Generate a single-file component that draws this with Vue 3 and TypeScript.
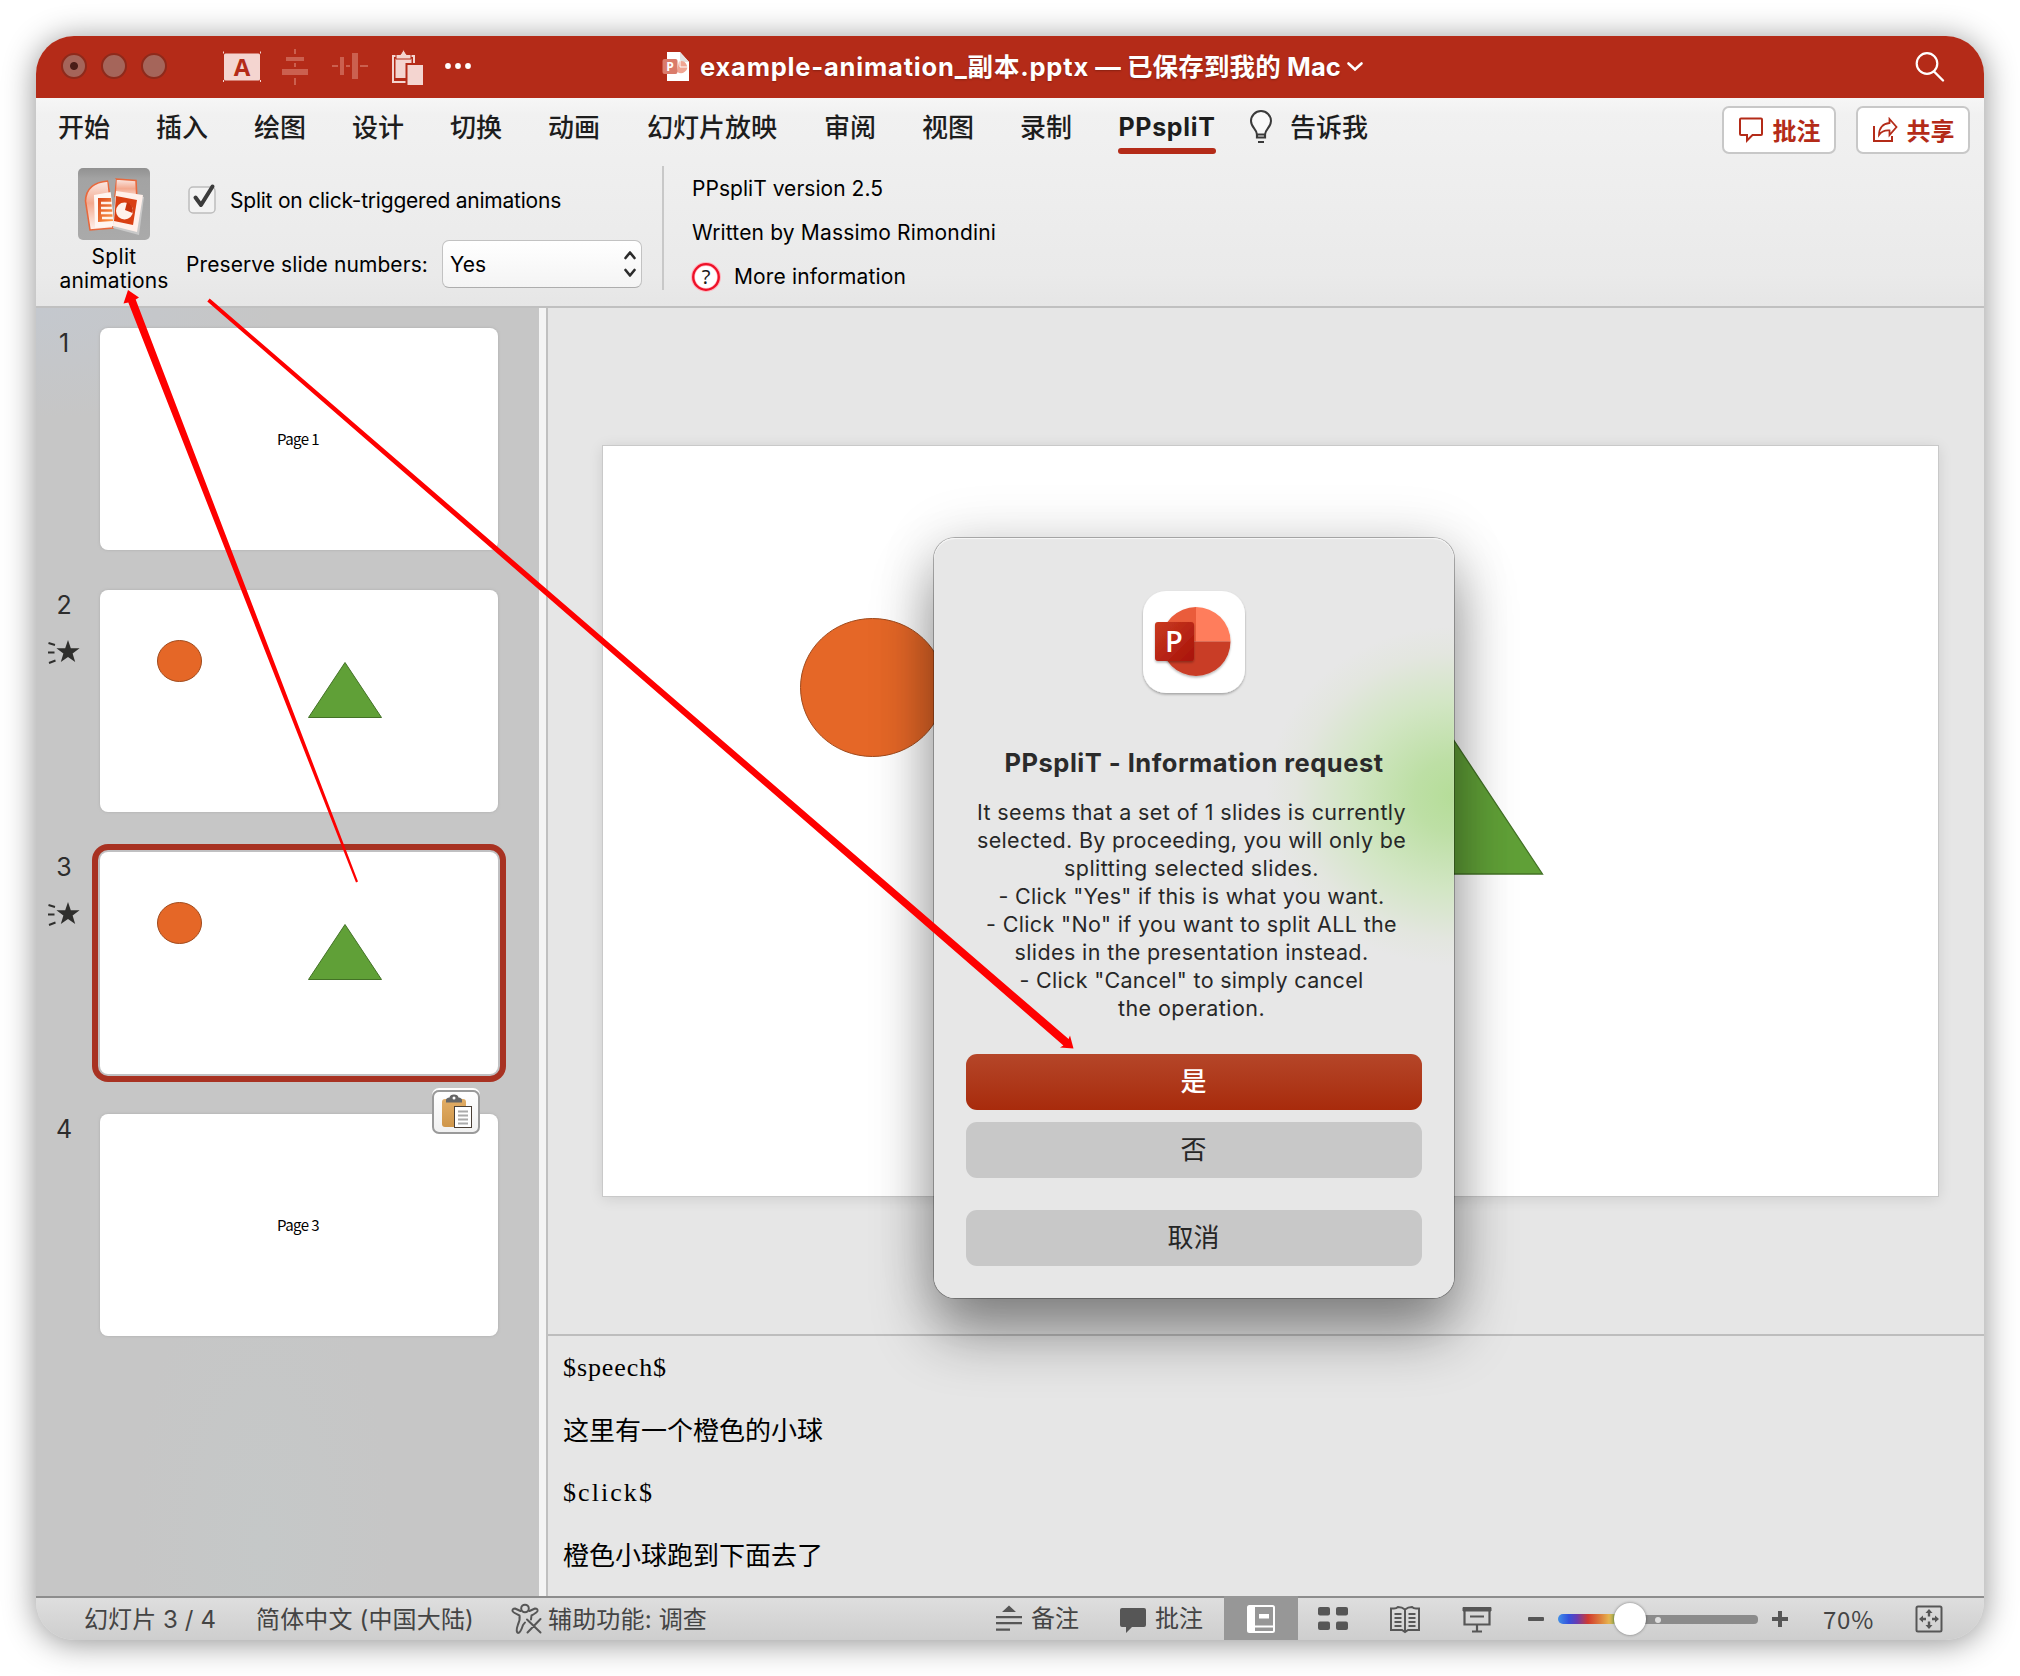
<script setup lang="ts">
import type { Directive } from 'vue'

interface Tab { label: string; width: number; active?: boolean }
interface Slide { no: number; text?: string; animated?: boolean; selected?: boolean }

const tabs: Tab[] = [
  { label: '开始', width: 52 },
  { label: '插入', width: 52 },
  { label: '绘图', width: 52 },
  { label: '设计', width: 52 },
  { label: '切换', width: 52 },
  { label: '动画', width: 52 },
  { label: '幻灯片放映', width: 132 },
  { label: '审阅', width: 52 },
  { label: '视图', width: 52 },
  { label: '录制', width: 52 },
  { label: 'PPspliT', width: 98, active: true },
]

const slides: Slide[] = [
  { no: 1, text: 'Page 1' },
  { no: 2, animated: true },
  { no: 3, animated: true, selected: true },
  { no: 4, text: 'Page 3' },
]

const message: { text: string; width: number }[] = [
  { text: 'It seems that a set of 1 slides is currently', width: 429 },
  { text: 'selected. By proceeding, you will only be', width: 429 },
  { text: 'splitting selected slides.', width: 255 },
  { text: '- Click "Yes" if this is what you want.', width: 386 },
  { text: '- Click "No" if you want to split ALL the', width: 411 },
  { text: 'slides in the presentation instead.', width: 354 },
  { text: '- Click "Cancel" to simply cancel', width: 344 },
  { text: 'the operation.', width: 147 },
]

const notes: { text: string; width: number }[] = [
  { text: '$speech$', width: 104 },
  { text: '这里有一个橙色的小球', width: 260 },
  { text: '$click$', width: 91 },
  { text: '橙色小球跑到下面去了', width: 260 },
]

// Tracks a label so that it fills the given width.
const vFit: Directive<HTMLElement, number> = {
  mounted(el, binding) {
    const natural = el.getBoundingClientRect().width
    const count = (el.textContent ?? '').length
    if (count > 0) el.style.letterSpacing = `${(binding.value - natural) / count}px`
  },
}
</script>

<template>
  <div class="desktop">
    <div class="window">
      <header class="titlebar">
        <div class="lights"><i class="dot"></i><i></i><i></i></div>
        <svg class="qat" width="260" height="40" viewBox="0 0 260 40">
          <g>
            <rect x="4" y="6.500" width="36" height="27" rx="1.500" fill="#f4d5d0" />
            <path d="M3.500 4.500v2M40.500 4.500v2M3.500 33v2M40.500 33v2" stroke="#f4d5d0" stroke-width="1" />
            <text x="22" y="28.500" text-anchor="middle" class="qat-a">A</text>
          </g>
          <g fill="#cb604f">
            <path d="M66 10h18v4H66zM62 22h26v6H62zM74 2h2v5h-2zM74 16h2v4h-2zM74 31h2v7h-2z" />
            <path d="M120 10h4v18h-4zM132 6h6v26h-6zM112 18h6v2h-6zM126 18h4v2h-4zM140 18h8v2h-8z" />
          </g>
          <g>
            <rect x="173" y="9" width="21" height="26" fill="none" stroke="#f4d5d0" stroke-width="2" />
            <rect x="175.500" y="11.500" width="16" height="19.500" fill="#f4d5d0" />
            <path d="M176 7.500h4.500l3-5 3 5h4.500v4.500h-15z" fill="#f4d5d0" stroke="#b42b18" stroke-width="1" />
            <rect x="185.500" y="16" width="18" height="22" fill="#b42b18" />
            <rect x="187.500" y="18" width="15.500" height="20" fill="#f4d5d0" />
          </g>
          <g fill="#fff"><circle cx="228" cy="19" r="2.900" /><circle cx="238" cy="19" r="2.900" /><circle cx="248" cy="19" r="2.900" /></g>
        </svg>
        <div class="doc">
          <svg width="28" height="32" viewBox="0 0 28 32">
            <path d="M5 1h13l9 10v19H5z" fill="#fff" />
            <path d="M18 1l9 10h-6q-3 0-3-3z" fill="#e3e1e0" />
            <path d="M17 10.500a6 6 0 1 1-2 10z" fill="#f0a593" />
            <path d="M18 10v6h7" fill="none" stroke="#fff" stroke-width="1" />
            <rect x="0.500" y="8" width="15" height="15" rx="2" fill="#da7b6b" />
            <text x="8" y="20" text-anchor="middle" class="doc-p">P</text>
          </svg>
          <span class="doc-name"><span v-fit="302 * 1.288">example-animation_副本.pptx</span><span v-fit="252"> — 已保存到我的 Mac</span></span>
          <svg width="18" height="12" viewBox="0 0 18 12"><path d="M2.500 2.500L9 8.500l6.500-6" fill="none" stroke="#fff" stroke-width="2.600" stroke-linecap="round" /></svg>
        </div>
        <svg class="search" width="32" height="32" viewBox="0 0 32 32">
          <circle cx="13" cy="12.500" r="10.300" fill="none" stroke="#fff" stroke-width="2.200" />
          <path d="M20 20.500l9 9" stroke="#fff" stroke-width="2.400" stroke-linecap="round" />
        </svg>
      </header>

      <section class="ribbon">
        <nav class="tabs">
          <span v-for="t in tabs" :key="t.label" class="tab" :class="{ active: t.active }" :style="{ width: t.width + 'px' }">
            <b v-if="t.active" v-fit="97">{{ t.label }}</b><template v-else>{{ t.label }}</template>
          </span>
          <svg class="bulb" width="24" height="34" viewBox="0 0 24 34">
            <path d="M8 24.500c0-5-6-7-6-13.500a10 10 0 0 1 20 0c0 6.500-6 8.500-6 13.500z" fill="#f8f8f8" stroke="#3a3a3a" stroke-width="2" />
            <path d="M8 24v3.500h8V24M9 32h6" fill="none" stroke="#3a3a3a" stroke-width="2.200" />
          </svg>
          <span class="tell">告诉我</span>
          <div class="actions">
            <button>
              <svg width="26" height="26" viewBox="0 0 26 26"><path d="M3 1.500h20q1 0 1 1V17q0 1-1 1h-8.500L9 23.500V18H3q-1 0-1-1V2.500q0-1 1-1z" fill="none" stroke="#b42b18" stroke-width="2" /></svg>
              批注
            </button>
            <button>
              <svg width="26" height="26" viewBox="0 0 26 26"><path d="M2 9v15h18v-5" fill="none" stroke="#b42b18" stroke-width="2" /><path d="M17.500 2l7 8-7 8v-4.500C12 13 9.500 14.500 7 18c0-7 4-11.500 10.500-12z" fill="none" stroke="#b42b18" stroke-width="1.800" /></svg>
              共享
            </button>
          </div>
        </nav>
        <div class="tools">
          <div class="split">
            <svg width="72" height="72" viewBox="0 0 72 72">
              <defs>
                <linearGradient id="tile" x1="0" y1="0" x2="0" y2="1"><stop offset="0" stop-color="#919191" /><stop offset=".15" stop-color="#a3a3a3" /><stop offset="1" stop-color="#aaa" /></linearGradient>
                <linearGradient id="gl" x1="0" y1="0" x2="0" y2="1"><stop offset="0" stop-color="#fbe9e4" /><stop offset=".45" stop-color="#f3a98f" /><stop offset="1" stop-color="#fff3ee" /></linearGradient>
                <linearGradient id="or" x1="0" y1="0" x2="1" y2="1"><stop offset="0" stop-color="#d9481c" /><stop offset="1" stop-color="#ff9a4a" /></linearGradient>
              </defs>
              <rect width="72" height="72" rx="5" fill="url(#tile)" />
              <path d="M30 13C16 14 8 20 7.500 33L12 62l23-2z" fill="url(#gl)" stroke="#e8683c" stroke-width="1.600" />
              <path d="M16 27l17-3 3 34-19 2z" fill="#fff6f2" />
              <path d="M20 30h13l2 23-15 1z" fill="url(#or)" />
              <path d="M23 35h11M23 40h11M23 45h12M24 50h11" stroke="#fff1e8" stroke-width="2.400" />
              <path d="M38 11l20 1.500 1 20-22-4z" fill="url(#gl)" stroke="#e8683c" stroke-width="1.600" />
              <path d="M38 25l28 4-5 38-26-7z" fill="#c9c9c9" />
              <path d="M38 23l27 4-6 37-24-6z" fill="#fff0ea" />
              <path d="M38 28l21 4-4 25-19-4z" fill="#d93f12" />
              <circle cx="46.500" cy="43" r="8.500" fill="#fff1ea" />
              <path d="M47 42l2-8a9 9 0 0 1 5.500 11z" fill="#c8330c" />
              <path d="M30 12l8-1-2 17-.5 10z" fill="#a6a6a6" />
            </svg>
            <span v-fit="45">Split</span>
            <span v-fit="109">animations</span>
          </div>
          <div class="options">
            <div class="option">
              <svg class="check" width="30" height="32" viewBox="0 0 30 32">
                <rect x="2" y="4" width="26" height="26" rx="4" fill="#f3f3f3" stroke="#bdbdbd" stroke-width="1.500" />
                <path d="M8.500 14.500l5.500 7.500L25.500 3.500" fill="none" stroke="#3c3c3c" stroke-width="4" stroke-linecap="round" stroke-linejoin="round" />
              </svg>
              <span v-fit="331">Split on click-triggered animations</span>
            </div>
            <div class="option">
              <span v-fit="242">Preserve slide numbers:</span>
              <div class="select">
                <span v-fit="36">Yes</span>
                <svg width="14" height="30" viewBox="0 0 14 30"><path d="M2.500 9L7 3.500 11.500 9M2.500 21L7 26.500 11.500 21" fill="none" stroke="#2c2c2c" stroke-width="2.600" stroke-linecap="round" stroke-linejoin="round" /></svg>
              </div>
            </div>
          </div>
          <div class="about">
            <div><span v-fit="191">PPspliT version 2.5</span></div>
            <div><span v-fit="304">Written by Massimo Rimondini</span></div>
            <div class="more">
              <svg width="32" height="32" viewBox="0 0 32 32"><circle cx="16" cy="16" r="13" fill="#fff" stroke="#ffb3bd" stroke-width="4" /><circle cx="16" cy="16" r="12.800" fill="none" stroke="#ee1128" stroke-width="2.300" /><text x="16" y="23" text-anchor="middle" class="qm">?</text></svg>
              <span v-fit="172">More information</span>
            </div>
          </div>
        </div>
      </section>

      <main class="work">
        <aside class="thumbs">
          <div v-for="s in slides" :key="s.no" class="thumb-row">
            <div class="gutter">
              <span>{{ s.no }}</span>
              <svg v-if="s.animated" width="34" height="28" viewBox="0 0 34 28">
                <path d="M21 2l2.800 8.300h8.800l-7 5.300 2.600 8.500L21 19l-7.200 5.100 2.600-8.500-7-5.300h8.800z" fill="#2f2f2d" />
                <path d="M1.500 5l6.500 2M1 14.500h6.500M2 25l6.500-2.500" stroke="#2f2f2d" stroke-width="1.900" />
              </svg>
            </div>
            <div class="thumb" :class="{ selected: s.selected }">
              <span v-if="s.text" v-fit="44">{{ s.text }}</span>
              <svg v-else width="398" height="222" viewBox="0 0 398 222">
                <ellipse cx="79.500" cy="71" rx="22" ry="20.500" fill="#e56727" stroke="#a04a1c" stroke-width="1" />
                <path d="M245 72.500L281.500 127.500H208.500z" fill="#60a037" stroke="#437226" stroke-width="1" />
              </svg>
            </div>
          </div>
          <div class="paste">
            <svg width="32" height="36" viewBox="0 0 32 36">
              <defs><linearGradient id="clip" x1="0" y1="0" x2="0" y2="1"><stop offset="0" stop-color="#e2ad65" /><stop offset="1" stop-color="#cf964a" /></linearGradient></defs>
              <rect x="1" y="5" width="24" height="28" rx="3" fill="url(#clip)" />
              <path d="M5 8.500V6q0-2 3.500-2.500Q9 .5 13 .5t4.500 3Q21 4 21 6v2.500z" fill="#666" />
              <circle cx="13" cy="4" r="1.500" fill="#fff" />
              <rect x="13.500" y="12.500" width="17" height="21" fill="#fff" stroke="#4a4037" stroke-width="1" />
              <path d="M17 17.500h10M17 21.500h10M17 25.500h10M17 29.500h10" stroke="#aaa" stroke-width="1.800" />
            </svg>
          </div>
        </aside>
        <div class="divider"></div>
        <div class="editor">
          <div class="canvas">
            <svg class="slide" width="1335" height="750" viewBox="0 0 1335 750">
              <ellipse cx="269.500" cy="241.500" rx="72" ry="69" fill="#e56727" stroke="#a04a1c" stroke-width="1" />
              <path d="M817.500 244L939.500 428H694z" fill="#60a037" stroke="#437226" stroke-width="1.300" />
            </svg>
          </div>
          <div class="notes">
            <p v-for="n in notes" :key="n.text"><span v-fit="n.width">{{ n.text }}</span></p>
          </div>
        </div>
      </main>

      <footer class="status">
        <span v-fit="132" class="s-page">幻灯片 3 / 4</span>
        <span v-fit="218" class="s-lang">简体中文 (中国大陆)</span>
        <svg class="s-acc" width="32" height="32" viewBox="0 0 32 32" fill="none" stroke="#565656" stroke-width="2" stroke-linecap="round" stroke-linejoin="round">
          <circle cx="15" cy="5.500" r="3.800" />
          <path d="M10.500 8L5 5.500q-2.800 0-2.500 2.500.5 1.500 7 4.500.8 4-1.500 9-2.500 7 0 8.500 2.500 0 5-8l2-2.500M19.500 8L25 5.500q3 0 2.500 2.500-.5 1.500-6 4.500l-.5 4M17 16.500l13.500 13M30.500 16L17.500 29.500" />
        </svg>
        <span v-fit="159" class="s-acctext">辅助功能: 调查</span>
        <div class="s-right">
          <svg width="28" height="30" viewBox="0 0 28 30" fill="#565656"><path d="M14 1.500L21 8H7zM1 12h26v2.200H1zM1 18h26v2.200H1zM1 24.500h14v2.200H1z" /></svg>
          <span class="s-notes">备注</span>
          <svg width="28" height="30" viewBox="0 0 28 30"><path d="M3 4h22q2 0 2 2v15q0 2-2 2H13l-6 6v-6H3q-2 0-2-2V6q0-2 2-2z" fill="#565656" /></svg>
          <span class="s-comm">批注</span>
          <div class="view current">
            <svg width="30" height="30" viewBox="0 0 30 30"><rect x="2" y="2" width="26" height="26" rx="1.500" fill="none" stroke="#fff" stroke-width="2" /><path d="M2 2h7v26H2zM13 10h10v4.500H13zM9 21.500h19v2H9z" fill="#fff" /></svg>
          </div>
          <div class="view">
            <svg width="30" height="28" viewBox="0 0 30 28" fill="#565656"><rect x="0" y="2" width="12" height="8.500" rx="2" /><rect x="18" y="2" width="12" height="8.500" rx="2" /><rect x="0" y="16.500" width="12" height="8.500" rx="2" /><rect x="18" y="16.500" width="12" height="8.500" rx="2" /></svg>
          </div>
          <div class="view">
            <svg width="30" height="30" viewBox="0 0 30 30" fill="none" stroke="#565656" stroke-width="2"><path d="M15 5.500Q12 3 8 3q-1.500 1.500-4 1.500H1V26h11l3 2 3-2h11V4.500h-3q-2.500 0-4-1.500-4 0-7 2.500zV27" /><path d="M4.500 10h7M4.500 14h7M4.500 18h7M4.500 22h7M18.500 10h7M18.500 14h7M18.500 18h7M18.500 22h7" stroke-width="1.800" /></svg>
          </div>
          <div class="view">
            <svg width="30" height="30" viewBox="0 0 30 30"><path d="M1 3.500h28V7H1z" fill="#565656" stroke="#565656" stroke-linejoin="round" /><path d="M2.500 6v14.500h25V6M8 12.500h14M15 20v7M10 27.500h10" fill="none" stroke="#565656" stroke-width="2.200" /></svg>
          </div>
          <i class="minus"></i>
          <div class="slider"><i class="rainbow"></i><i class="track"></i><i class="tick"></i><i class="knob"></i></div>
          <i class="plus"></i>
          <span v-fit="51" class="s-zoom">70%</span>
          <svg width="28" height="28" viewBox="0 0 28 28"><rect x="1.500" y="1.500" width="25" height="25" rx="1.500" fill="none" stroke="#565656" stroke-width="2" /><path d="M14 4l3.500 4h-2.300v3.500h-2.400V8h-2.300zM14 24l3.500-4h-2.300v-3.500h-2.400V20h-2.300zM4 14l4-3.500v2.300h3v2.400H8v2.300zM24 14l-4-3.500v2.300h-3v2.400h3v2.300z" fill="#565656" /></svg>
        </div>
      </footer>
    </div>

    <div class="dialog">
      <svg class="app-icon" width="110" height="110" viewBox="0 0 110 110">
        <defs>
          <linearGradient id="plate" x1="0" y1="0" x2="1" y2="1"><stop offset="0" stop-color="#c93a20" /><stop offset="1" stop-color="#a8120a" /></linearGradient>
          <filter id="soft" x="-20%" y="-20%" width="150%" height="150%"><feDropShadow dx="0" dy="1.500" stdDeviation="1.200" flood-opacity=".3" /></filter>
        </defs>
        <rect x="4" y="3" width="102" height="102" rx="23" fill="#fff" filter="url(#soft)" />
        <g filter="url(#soft)">
          <path d="M57 19a34.500 34.500 0 0 0-34.500 34.500H57z" fill="#ea5b3b" />
          <path d="M57 19a34.500 34.500 0 0 1 34.500 34.500H57z" fill="#ff7d5b" />
          <path d="M22.500 53.500a34.500 34.500 0 0 0 69 0z" fill="#c93d26" />
        </g>
        <rect x="16" y="34" width="39" height="39" rx="3" fill="url(#plate)" filter="url(#soft)" />
        <text x="35" y="63.500" text-anchor="middle" class="app-p">P</text>
      </svg>
      <h1><span v-fit="379">PPspliT - Information request</span></h1>
      <div class="message">
        <p v-for="m in message" :key="m.text"><span v-fit="m.width">{{ m.text }}</span></p>
      </div>
      <button class="primary">是</button>
      <button>否</button>
      <button class="cancel">取消</button>
    </div>

    <svg class="arrows" width="2020" height="1676" viewBox="0 0 2020 1676" fill="#fe0000">
      <path d="M356 882.500L128.300 302.400 123.500 303.500 128 290 139 297.500 135.700 299.600 358 881.500z" />
      <path d="M207.300 301.400L1063.400 1045.500 1060 1047.500 1073.500 1048.500 1070 1035.500 1068.600 1039 209.700 298.600z" />
    </svg>
  </div>
</template>

<style>
body { margin: 0; background: #fff; }
</style>

<style scoped>
.desktop {
  position: relative;
  width: 2020px;
  height: 1676px;
  overflow: hidden;
  box-sizing: border-box;
  padding: 36px;
  background: #fff;
  font-family: Inter, "Noto Sans CJK SC", sans-serif;
  color: #000;
}
.desktop span { white-space: pre; }
svg { display: block; flex: none; }
p { margin: 0; }
.window {
  width: 1948px;
  height: 1604px;
  border-radius: 38px;
  overflow: hidden;
  display: flex;
  flex-direction: column;
  box-shadow: 0 3px 32px rgba(0, 0, 0, .44);
  background: #e6e6e6;
}
.titlebar {
  height: 62px;
  flex: none;
  background: #b42b18;
  display: flex;
  align-items: center;
}
.lights { display: flex; gap: 14px; margin-left: 25px; padding-bottom: 2px; }
.lights i {
  width: 26px; height: 26px; box-sizing: border-box; border-radius: 50%;
  background: #a5655a; border: 2px solid #8e2a1b;
}
.lights .dot { background: radial-gradient(circle, #4a1d17 0 3.500px, #a5655a 4.500px); }
.qat { margin-left: 53px; }
.qat-a { font: 700 24px "Open Sans", sans-serif; fill: #b42b18; }
.doc { display: flex; align-items: center; margin-left: 182px; }
.doc-p { font: 700 12px "Open Sans", sans-serif; fill: #fff; }
.doc-name {
  margin: 0 5px 0 10px; font-size: 25.500px; font-weight: 700; color: #fff; line-height: 40px;
  text-shadow: 0 1px 2px rgba(0, 0, 0, .25);
}
.search { margin-left: auto; margin-right: 38px; }

.ribbon {
  height: 208px;
  flex: none;
  background: linear-gradient(#f6f6f6, #f1f1f1 8%, #eaeaea 85%, #e6e6e6);
  border-bottom: 2px solid #c0c0c0;
  display: flex;
  flex-direction: column;
}
.tabs { height: 58px; display: flex; align-items: center; padding-left: 22px; gap: 46px; font-size: 26px; font-weight: 500; color: #1d1d1d; }
.tab { height: 58px; line-height: 59px; box-sizing: border-box; display: flex; justify-content: center; white-space: nowrap; }
.desktop .tab { white-space: nowrap; }
.tab b { font-size: 25px; font-weight: 700; }
.tab.active { position: relative; line-height: 59px; }
.tab.active::after { content: ""; position: absolute; left: 0; right: 0; bottom: 2px; height: 6px; border-radius: 3px; background: #b42b18; }
.bulb { margin-left: -13px; }
.tell { margin-left: -29px; line-height: 56px; padding-top: 1px; }
.actions { margin-left: auto; margin-right: 14px; display: flex; gap: 20px; padding-top: 6px; }
.actions button {
  width: 114px; height: 48px; box-sizing: border-box; padding: 0; border: 2px solid #c8c8c8; border-radius: 7px;
  background: #fff; color: #b42b18; font: 700 24px/44px "Noto Sans CJK SC", sans-serif;
  display: flex; align-items: center; justify-content: center; gap: 9px;
}
.tools { height: 148px; display: flex; font-size: 21px; }
.split { width: 110px; margin-left: 23px; margin-top: 12px; display: flex; flex-direction: column; align-items: center; line-height: 24px; }
.split svg { margin-bottom: 5px; }
.options { margin-left: 17px; padding-top: 12px; width: 476px; display: flex; flex-direction: column; }
.option { height: 64px; display: flex; align-items: center; line-height: 30px; }
.option span { padding-top: 2px; }
.check { margin: -3px 13px 0 1px; }
.select {
  margin-left: 14px; width: 200px; height: 48px; box-sizing: border-box; border: 1.500px solid #c2c2c2; border-radius: 7px;
  background: linear-gradient(#fff, #f4f4f4); display: flex; align-items: center; justify-content: space-between; padding: 0 4px 0 7px;
  border-bottom-color: #adadad;
}
.about { margin: 10px 0 0; height: 124px; border-left: 2px solid #c8c8c8; padding-left: 28px; line-height: 44px; }
.about div { height: 44px; position: relative; top: 1px; }
.about .more { display: flex; align-items: center; margin-left: -2px; }
.about .more span { margin-left: 12px; }
.qm { font: 400 20px "Noto Sans", sans-serif; fill: #1a1a1a; }

.work { height: 1288px; flex: none; display: flex; }
.thumbs {
  position: relative;
  width: 503px;
  box-sizing: border-box;
  background:
    radial-gradient(ellipse 240px 110px at 0 0, #c4c8ce, transparent),
    radial-gradient(ellipse 130px 300px at 45% 96%, #c5c8c8, transparent),
    #c6c6c6;
  padding-top: 20px;
}
.thumb-row { height: 262px; display: flex; }
.gutter { width: 64px; flex: none; font-size: 25px; color: #2d2d2d; line-height: 30px; display: flex; flex-direction: column; }
.gutter span { display: block; width: 56px; text-align: center; }
.gutter svg { margin: 18px 0 0 11px; }
.thumb {
  width: 398px; height: 222px; border-radius: 8px; background: #fff; overflow: hidden;
  display: flex; align-items: center; justify-content: center; box-shadow: 0 0 2px 1px rgba(180, 180, 180, .7);
  font: 15px "Noto Sans CJK SC", sans-serif;
}
.thumb span { padding: 0 2px 1px 0; }
.thumb.selected { box-shadow: 0 0 0 2px #c0c0c2, 0 0 0 8px #a83222; }
.paste {
  position: absolute; left: 396px; top: 782px; width: 48px; height: 44px; box-sizing: border-box; border: 2px solid #9a9a9a;
  border-radius: 7px; background: linear-gradient(#fff, #f1f1f1); display: flex; align-items: center; justify-content: center; padding-left: 1px;
  box-shadow: 0 -2px 0 #fff;
}
.divider { width: 7px; background: #f4f4f4; border-right: 2px solid #c0c0c0; }
.editor { flex: 1; display: flex; flex-direction: column; }
.canvas { height: 1026px; flex: none; border-bottom: 2px solid #bdbdbd; }
.slide { margin: 138px 0 0 54.500px; background: #fff; box-shadow: 0 0 0 1px #c9c9c9, 0 2px 14px rgba(0, 0, 0, .12); }
.notes { padding-left: 15px; padding-top: 1px; font: 26px "Liberation Serif", "Noto Sans CJK SC", serif; font-weight: 400; }
.notes p { height: 62.700px; line-height: 62px; }
.notes p:nth-child(even) { position: relative; top: 1px; }

.status {
  height: 42px; border-top: 2px solid #8d8d8d; background: linear-gradient(#dedede, #cecece); display: flex; align-items: center;
  font-size: 24px; line-height: 42px; color: #444; font-weight: 400;
}
.s-page, .s-lang, .s-acctext { padding-top: 1px; }
.s-page { margin-left: 48px; }
.s-lang { margin-left: 40px; }
.s-acc { margin-left: 36px; }
.s-acctext { margin-left: 6px; }
.s-right { margin-left: auto; margin-right: 41px; display: flex; align-items: center; }
.s-notes { margin-left: 8px; margin-right: 40px; }
.s-comm { margin-left: 8px; margin-right: 21px; }
.view { width: 72px; height: 42px; display: flex; align-items: center; justify-content: center; }
.view.current { width: 74px; height: 44px; margin-top: -2px; padding-top: 2px; box-sizing: border-box; background: #979797; margin-right: -1px; }
.minus { width: 16px; height: 4px; border-radius: 1px; background: #565656; margin-left: 15px; }
.slider { position: relative; width: 200px; height: 42px; margin: 0 14px; }
.slider i { position: absolute; }
.rainbow { left: 0; top: 16px; width: 60px; height: 10px; border-radius: 5px; background: linear-gradient(90deg, #3f8fe8, #3350dc 18%, #6a3bb0 32%, #d13a2e 50%, #dd7c3c 70%, #e6b44e 85%, #6fae5c); }
.track { left: 80px; top: 17px; width: 120px; height: 9px; border-radius: 4px; background: #8b8b8b; }
.tick { left: 97px; top: 19px; width: 6px; height: 6px; border-radius: 50%; background: #dedede; }
.knob { left: 56px; top: 5px; width: 32px; height: 32px; border-radius: 50%; background: #fff; box-shadow: 0 0 3px rgba(0, 0, 0, .45); }
.plus { width: 16px; height: 16px; background: linear-gradient(#565656, #565656) center / 16px 4px no-repeat, linear-gradient(#565656, #565656) center / 4px 16px no-repeat; }
.s-zoom { margin-left: 35px; margin-right: 41px; font-family: "Noto Sans CJK SC", sans-serif; }

.dialog {
  position: absolute; left: 934px; top: 538px; width: 520px; height: 760px; box-sizing: border-box; border-radius: 21px;
  background: radial-gradient(ellipse 190px 170px at 522px 258px, #b5dd98, #bddfa5 22%, #d2e6c4 55%, #e3e6df 84%, #e7e7e7);
  box-shadow: 0 0 0 1px rgba(0, 0, 0, .28), inset 0 1px 1px rgba(255, 255, 255, .7), 0 34px 60px rgba(0, 0, 0, .42), 0 0 60px rgba(0, 0, 0, .12);
  display: flex; flex-direction: column; align-items: center;
}
.app-icon { margin-top: 50px; }
.app-p { font: 600 29px "Open Sans", sans-serif; fill: #fff; }
h1 { margin: 47px 0 0; font-size: 25.500px; font-weight: 700; line-height: 36px; color: #2b2b2b; }
.message { margin-top: 17px; width: 515px; margin-right: 5px; text-align: center; font-size: 21.500px; line-height: 28px; color: #272727; }
.message p { height: 28px; }
.dialog button {
  width: 456px; height: 56px; flex: none; border: 0; padding: 0 1px 4px 0; border-radius: 11px; background: #c8c8c8; color: #262626;
  font: 26px/52px "Noto Sans CJK SC", sans-serif; margin-bottom: 12px;
}
.dialog .primary { margin-top: 32px; background: linear-gradient(#b54629, #a82b0c); color: #fff; font-weight: 500; }
.dialog .cancel { margin-top: 20px; }
.arrows { position: absolute; left: 0; top: 0; }
</style>
